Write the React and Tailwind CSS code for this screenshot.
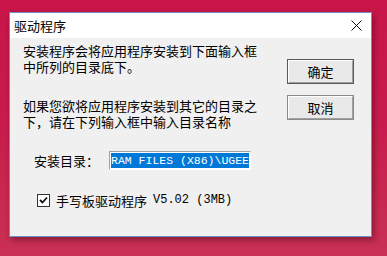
import React from 'react';

const cjk = { fontFamily: '"Noto Sans CJK SC", "Noto Sans", sans-serif' };
const mono = { fontFamily: '"Liberation Mono", "Noto Sans CJK SC", monospace' };

const Button = ({ children, isDefault }) => (
  <div className={`w-[67px] h-[25px] bg-[#e9e9e9] border flex items-center justify-center ${isDefault ? 'border-[#5a5a5a]' : 'border-[#8a8a8a]'}`}>
    <div className="w-full h-full border-t border-l border-white border-b border-r border-b-[#a0a0a0] border-r-[#a0a0a0] flex items-center justify-center text-[13px] text-black" style={cjk}>
      {children}
    </div>
  </div>
);

const App = () => {
  return (
    <div className="w-[387px] h-[256px] bg-gradient-to-b from-[#c8154a] via-[#c81c4c] to-[#c93054] overflow-hidden pt-[12px] pl-[9px]">
      <div className="w-[363px] h-[225px] border border-[#6f8fc6] bg-white flex flex-col shadow-[2px_3px_6px_rgba(60,0,20,0.45)]">
        {/* title bar */}
        <div className="h-[25px] flex items-center justify-between pl-[4px] pr-[9px] bg-white">
          <span className="text-[13px] text-black leading-none" style={cjk}>驱动程序</span>
          <svg width="11" height="11" viewBox="0 0 11 11">
            <path d="M0.5 0.5 L10.5 10.5 M10.5 0.5 L0.5 10.5" stroke="#111" strokeWidth="1" />
          </svg>
        </div>

        {/* client area */}
        <div className="flex-1 bg-[#f0f0f0] flex flex-col text-black">
          <div className="flex">
            <div className="pl-[13px] pt-[5px] w-[277px] text-[13px] leading-[16px]" style={cjk}>
              <p>安装程序会将应用程序安装到下面输入框</p>
              <p>中所列的目录底下。</p>
              <p className="mt-[23px]">如果您欲将应用程序安装到其它的目录之</p>
              <p>下，请在下列输入框中输入目录名称</p>
            </div>
            <div className="flex flex-col gap-[11px] pt-[21px]">
              <Button isDefault>确定</Button>
              <Button>取消</Button>
            </div>
          </div>

          <div className="flex items-center mt-[21px] pl-[24px]">
            <span className="text-[13px] w-[75px]" style={cjk}>安装目录：</span>
            <div className="w-[142px] h-[19px] border border-t-[#a0a0a0] border-l-[#a0a0a0] border-b-white border-r-white bg-white p-[1px] overflow-hidden">
              <div className="h-full bg-[#0078d7] text-white text-[11.5px] leading-[15px] whitespace-nowrap overflow-hidden" style={mono}>
                RAM FILES (X86)\UGEE
              </div>
            </div>
          </div>

          <div className="flex items-center mt-[23px] pl-[27px]">
            <div className="w-[13px] h-[13px] border border-[#333] bg-white flex items-center justify-center">
              <svg width="9" height="8" viewBox="0 0 9 8">
                <path d="M1 4 L3.5 6.5 L8 1.5" stroke="#111" strokeWidth="1.8" fill="none" />
              </svg>
            </div>
            <span className="ml-[6px] text-[13px] leading-none" style={cjk}>手写板驱动程序</span>
            <span className="ml-[6px] text-[12px] leading-none" style={mono}>V5.02 (3MB)</span>
          </div>
        </div>
      </div>
    </div>
  );
};

export default App;
